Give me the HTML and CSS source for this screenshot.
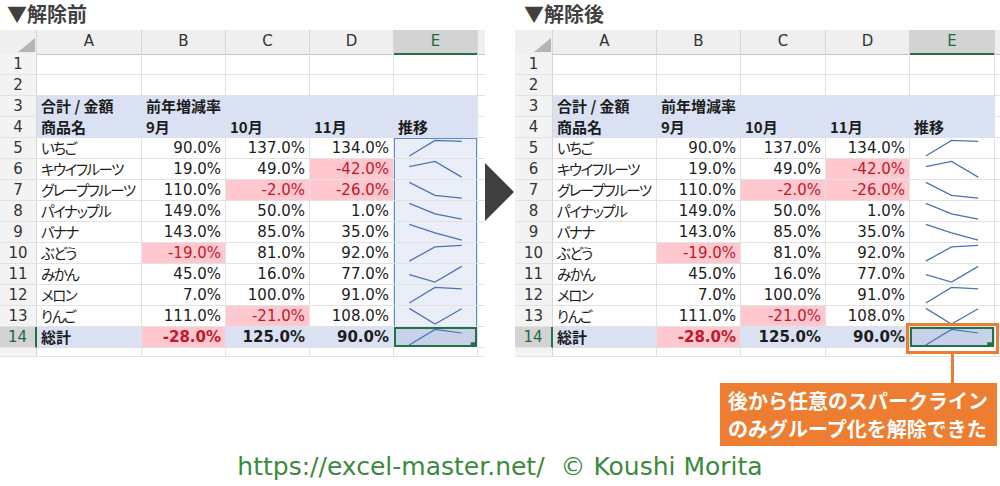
FILE: index.html
```html
<!DOCTYPE html>
<html lang="ja">
<head>
<meta charset="utf-8">
<title>スパークラインのグループ化解除</title>
<link rel="stylesheet" href="styles.css">
</head>
<body>
<div class="top">
  <section class="panel panel-left">
    <h2 class="title">▼解除前</h2>
    <div class="sheet">
      <div class="row hdr"><div class="corner"><span class="tri"></span></div><div class="ch">A</div><div class="ch">B</div><div class="ch">C</div><div class="ch">D</div><div class="ch sel">E</div><div class="ch f"></div></div>
      <div class="row"><div class="rh">1</div><div class="c"></div><div class="c"></div><div class="c"></div><div class="c"></div><div class="c"></div><div class="c f"></div></div>
      <div class="row"><div class="rh">2</div><div class="c"></div><div class="c"></div><div class="c"></div><div class="c"></div><div class="c"></div><div class="c f"></div></div>
      <div class="row pv"><div class="rh">3</div><div class="c t">合計 / 金額</div><div class="c t">前年増減率</div><div class="c"></div><div class="c"></div><div class="c"></div><div class="c f"></div></div>
      <div class="row pv"><div class="rh">4</div><div class="c t">商品名</div><div class="c t">9月</div><div class="c t">10月</div><div class="c t">11月</div><div class="c t">推移</div><div class="c f"></div></div>
      <div class="row"><div class="rh">5</div><div class="c t k">いちご</div><div class="c n">90.0%</div><div class="c n">137.0%</div><div class="c n">134.0%</div><div class="c sp g gtop"><svg viewBox="0 0 84 21"><polyline points="14.5,19 41.5,2.5 69.5,3.6"/></svg></div><div class="c f"></div></div>
      <div class="row"><div class="rh">6</div><div class="c t k">キウイフルーツ</div><div class="c n">19.0%</div><div class="c n">49.0%</div><div class="c n neg">-42.0%</div><div class="c sp g"><svg viewBox="0 0 84 21"><polyline points="14.5,7.9 41.5,2.5 69.5,19"/></svg></div><div class="c f"></div></div>
      <div class="row"><div class="rh">7</div><div class="c t k">グレープフルーツ</div><div class="c n">110.0%</div><div class="c n neg">-2.0%</div><div class="c n neg">-26.0%</div><div class="c sp g"><svg viewBox="0 0 84 21"><polyline points="14.5,2.5 41.5,16.1 69.5,19"/></svg></div><div class="c f"></div></div>
      <div class="row"><div class="rh">8</div><div class="c t k">パイナップル</div><div class="c n">149.0%</div><div class="c n">50.0%</div><div class="c n">1.0%</div><div class="c sp g"><svg viewBox="0 0 84 21"><polyline points="14.5,2.5 41.5,13.5 69.5,19"/></svg></div><div class="c f"></div></div>
      <div class="row"><div class="rh">9</div><div class="c t k">バナナ</div><div class="c n">143.0%</div><div class="c n">85.0%</div><div class="c n">35.0%</div><div class="c sp g"><svg viewBox="0 0 84 21"><polyline points="14.5,2.5 41.5,11.4 69.5,19"/></svg></div><div class="c f"></div></div>
      <div class="row"><div class="rh">10</div><div class="c t k">ぶどう</div><div class="c n neg">-19.0%</div><div class="c n">81.0%</div><div class="c n">92.0%</div><div class="c sp g"><svg viewBox="0 0 84 21"><polyline points="14.5,19 41.5,4.1 69.5,2.5"/></svg></div><div class="c f"></div></div>
      <div class="row"><div class="rh">11</div><div class="c t k">みかん</div><div class="c n">45.0%</div><div class="c n">16.0%</div><div class="c n">77.0%</div><div class="c sp g"><svg viewBox="0 0 84 21"><polyline points="14.5,11.2 41.5,19 69.5,2.5"/></svg></div><div class="c f"></div></div>
      <div class="row"><div class="rh">12</div><div class="c t k">メロン</div><div class="c n">7.0%</div><div class="c n">100.0%</div><div class="c n">91.0%</div><div class="c sp g"><svg viewBox="0 0 84 21"><polyline points="14.5,19 41.5,2.5 69.5,4.1"/></svg></div><div class="c f"></div></div>
      <div class="row"><div class="rh">13</div><div class="c t k">りんご</div><div class="c n">111.0%</div><div class="c n neg">-21.0%</div><div class="c n">108.0%</div><div class="c sp g"><svg viewBox="0 0 84 21"><polyline points="14.5,2.5 41.5,19 69.5,2.9"/></svg></div><div class="c f"></div></div>
      <div class="row pv tot"><div class="rh sel">14</div><div class="c t">総計</div><div class="c n neg">-28.0%</div><div class="c n">125.0%</div><div class="c n">90.0%</div><div class="c sp cur"><svg viewBox="0 0 84 21"><polyline points="14.5,19 41.5,2.5 69.5,6.3"/><rect class="handle" x="79" y="16" width="5" height="5"/></svg></div><div class="c f"></div></div>
      <div class="row part"><div class="rh"></div><div class="c"></div><div class="c"></div><div class="c"></div><div class="c"></div><div class="c"></div><div class="c f"></div></div>
    </div>
  </section>

  <div class="arrow"><div class="arrow-head"></div></div>

  <section class="panel panel-right">
    <h2 class="title">▼解除後</h2>
    <div class="sheet">
      <div class="row hdr"><div class="corner"><span class="tri"></span></div><div class="ch">A</div><div class="ch">B</div><div class="ch">C</div><div class="ch">D</div><div class="ch sel">E</div><div class="ch f"></div></div>
      <div class="row"><div class="rh">1</div><div class="c"></div><div class="c"></div><div class="c"></div><div class="c"></div><div class="c"></div><div class="c f"></div></div>
      <div class="row"><div class="rh">2</div><div class="c"></div><div class="c"></div><div class="c"></div><div class="c"></div><div class="c"></div><div class="c f"></div></div>
      <div class="row pv"><div class="rh">3</div><div class="c t">合計 / 金額</div><div class="c t">前年増減率</div><div class="c"></div><div class="c"></div><div class="c"></div><div class="c f"></div></div>
      <div class="row pv"><div class="rh">4</div><div class="c t">商品名</div><div class="c t">9月</div><div class="c t">10月</div><div class="c t">11月</div><div class="c t">推移</div><div class="c f"></div></div>
      <div class="row"><div class="rh">5</div><div class="c t k">いちご</div><div class="c n">90.0%</div><div class="c n">137.0%</div><div class="c n">134.0%</div><div class="c sp"><svg viewBox="0 0 84 21"><polyline points="14.5,19 41.5,2.5 69.5,3.6"/></svg></div><div class="c f"></div></div>
      <div class="row"><div class="rh">6</div><div class="c t k">キウイフルーツ</div><div class="c n">19.0%</div><div class="c n">49.0%</div><div class="c n neg">-42.0%</div><div class="c sp"><svg viewBox="0 0 84 21"><polyline points="14.5,7.9 41.5,2.5 69.5,19"/></svg></div><div class="c f"></div></div>
      <div class="row"><div class="rh">7</div><div class="c t k">グレープフルーツ</div><div class="c n">110.0%</div><div class="c n neg">-2.0%</div><div class="c n neg">-26.0%</div><div class="c sp"><svg viewBox="0 0 84 21"><polyline points="14.5,2.5 41.5,16.1 69.5,19"/></svg></div><div class="c f"></div></div>
      <div class="row"><div class="rh">8</div><div class="c t k">パイナップル</div><div class="c n">149.0%</div><div class="c n">50.0%</div><div class="c n">1.0%</div><div class="c sp"><svg viewBox="0 0 84 21"><polyline points="14.5,2.5 41.5,13.5 69.5,19"/></svg></div><div class="c f"></div></div>
      <div class="row"><div class="rh">9</div><div class="c t k">バナナ</div><div class="c n">143.0%</div><div class="c n">85.0%</div><div class="c n">35.0%</div><div class="c sp"><svg viewBox="0 0 84 21"><polyline points="14.5,2.5 41.5,11.4 69.5,19"/></svg></div><div class="c f"></div></div>
      <div class="row"><div class="rh">10</div><div class="c t k">ぶどう</div><div class="c n neg">-19.0%</div><div class="c n">81.0%</div><div class="c n">92.0%</div><div class="c sp"><svg viewBox="0 0 84 21"><polyline points="14.5,19 41.5,4.1 69.5,2.5"/></svg></div><div class="c f"></div></div>
      <div class="row"><div class="rh">11</div><div class="c t k">みかん</div><div class="c n">45.0%</div><div class="c n">16.0%</div><div class="c n">77.0%</div><div class="c sp"><svg viewBox="0 0 84 21"><polyline points="14.5,11.2 41.5,19 69.5,2.5"/></svg></div><div class="c f"></div></div>
      <div class="row"><div class="rh">12</div><div class="c t k">メロン</div><div class="c n">7.0%</div><div class="c n">100.0%</div><div class="c n">91.0%</div><div class="c sp"><svg viewBox="0 0 84 21"><polyline points="14.5,19 41.5,2.5 69.5,4.1"/></svg></div><div class="c f"></div></div>
      <div class="row"><div class="rh">13</div><div class="c t k">りんご</div><div class="c n">111.0%</div><div class="c n neg">-21.0%</div><div class="c n">108.0%</div><div class="c sp"><svg viewBox="0 0 84 21"><polyline points="14.5,2.5 41.5,19 69.5,2.9"/></svg></div><div class="c f"></div></div>
      <div class="row pv tot"><div class="rh sel">14</div><div class="c t">総計</div><div class="c n neg">-28.0%</div><div class="c n">125.0%</div><div class="c n">90.0%</div><div class="c sp cur"><svg viewBox="0 0 84 21"><polyline points="14.5,19 41.5,2.5 69.5,6.3"/><rect class="handle" x="79" y="16" width="5" height="5"/></svg></div><div class="c f"></div></div>
      <div class="row part"><div class="rh"></div><div class="c"></div><div class="c"></div><div class="c"></div><div class="c"></div><div class="c"></div><div class="c f"></div></div>
    </div>
  </section>
</div>

<p class="footer">https://excel-master.net/&nbsp; © Koushi Morita</p>

<div class="highlight"></div>
<div class="connector"></div>
<div class="callout">後から任意のスパークライン<br>のみグループ化を解除できた</div>
</body>
</html>
```

FILE: styles.css
```css
* {
  box-sizing: border-box;
  margin: 0;
  padding: 0;
}

body {
  width: 1000px;
  height: 486px;
  background: #ffffff;
  font-family: "DejaVu Sans", "Noto Sans CJK JP", sans-serif;
  position: relative;
  overflow: hidden;
}

.top {
  display: flex;
  height: 357px;
}

.panel {
  width: 485px;
  flex: none;
}

.title {
  height: 30px;
  font: bold 20px/27px "Noto Sans CJK JP", sans-serif;
  color: #404040;
  padding-left: 7px;
}

.panel-right .title {
  padding-left: 9px;
}

.sheet {
  font-size: 15px;
  color: #1c1c1c;
}

.row {
  display: grid;
  grid-template-columns: 37px 105px 84px 84px 84px 84px 1fr;
  height: 21px;
}

.panel-right .row {
  grid-template-columns: 38px 104px 84px 85px 84px 85px 1fr;
}

.row.hdr {
  height: 24px;
}

.row.part {
  height: 9px;
}

.corner,
.ch {
  background: #efefef;
  border-right: 1px solid #d6d6d6;
  border-bottom: 1px solid #c4c4c4;
}

.ch {
  text-align: center;
  line-height: 23px;
  color: #333333;
}

.ch.sel {
  background: #d3d3d3;
  color: #1d6b3c;
  border-bottom: 2px solid #217346;
}

.ch.f {
  border-right: none;
}

.tri {
  display: block;
  width: 17px;
  height: 14px;
  margin: 8px 1px 0 auto;
  background: #b5b5b5;
  clip-path: polygon(100% 0, 100% 100%, 0 100%);
}

.rh {
  background: #f3f3f3;
  border-right: 1px solid #d6d6d6;
  border-bottom: 1px solid #e2e2e2;
  text-align: center;
  line-height: 20px;
  color: #333333;
}

.rh.sel {
  background: #d3d3d3;
  color: #1d6b3c;
  border-right: 2px solid #217346;
}

.c {
  border-right: 1px solid #e2e2e2;
  border-bottom: 1px solid #e2e2e2;
  line-height: 20px;
  white-space: nowrap;
  overflow: hidden;
}

.c.f {
  border-right: none;
}

.t {
  padding-left: 4px;
  font-family: "Noto Sans CJK JP", sans-serif;
  font-feature-settings: "palt";
}

.t.k {
  font-size: 14.5px;
  letter-spacing: -1.5px;
}

.n {
  text-align: right;
  padding-right: 4px;
}

.pv .c:not(.f) {
  background: #d9e1f2;
  border-right-color: #d9e1f2;
  border-bottom-color: #d9e1f2;
  font-weight: bold;
}

.tot .c:not(.f) {
  border-bottom-color: #e2e2e2;
}

.c.neg,
.pv .c.neg {
  background: #ffc7ce;
  color: #c2172b;
}

.sp svg {
  display: block;
  width: 100%;
  height: 20px;
  overflow: visible;
}

.sp polyline {
  fill: none;
  stroke: #4a72b8;
  stroke-width: 1.3;
}

.sp .handle {
  fill: #217346;
}

.sp.g {
  background: #e9eef8;
  box-shadow: inset 1px 0 0 #5a8dd3, inset -1px 0 0 #5a8dd3;
}

.sp.gtop {
  box-shadow: inset 1px 0 0 #5a8dd3, inset -1px 0 0 #5a8dd3, inset 0 1px 0 #5a8dd3;
}

.pv .c.sp.cur {
  background: #c7d2ea;
  box-shadow: inset 0 0 0 2px #217346;
  border-bottom-color: #ffffff;
}

.arrow {
  width: 30px;
  flex: none;
}

.arrow-head {
  margin-top: 163px;
  width: 0;
  height: 0;
  border-left: 29px solid #404040;
  border-top: 29px solid transparent;
  border-bottom: 29px solid transparent;
}

.footer {
  margin-top: 95px;
  text-align: center;
  font: 25px/30px "DejaVu Sans", sans-serif;
  color: #3b8a3e;
}

.highlight {
  position: absolute;
  left: 906px;
  top: 323px;
  width: 93px;
  height: 31px;
  border: 3px solid #ed7d31;
}

.connector {
  position: absolute;
  left: 951px;
  top: 354px;
  width: 3px;
  height: 29px;
  background: #ed7d31;
}

.callout {
  position: absolute;
  left: 720px;
  top: 383px;
  width: 277px;
  height: 63px;
  background: #ed7d31;
  color: #ffffff;
  font: bold 20px/28px "Noto Sans CJK JP", sans-serif;
  padding: 4px 0 0 8px;
  white-space: nowrap;
}
```
